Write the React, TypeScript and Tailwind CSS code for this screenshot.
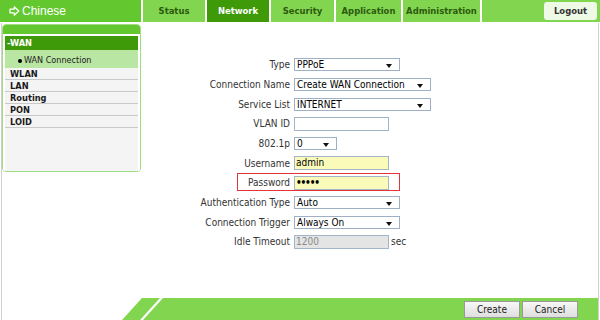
import React from 'react';

const tabs = [
  { name: 'Status', w: 'w-[62px]' },
  { name: 'Network', w: 'w-[62px]', active: true },
  { name: 'Security', w: 'w-[63px]' },
  { name: 'Application', w: 'w-[65px]' },
  { name: 'Administration', w: 'w-[77px]' },
];

const menu = ['WLAN', 'LAN', 'Routing', 'PON', 'LOID'];

function Arrow() {
  return (
    <svg width="11" height="10" viewBox="0 0 11 10" className="mr-[2px]">
      <path d="M1 3.2 H5.2 V0.8 L9.8 5 L5.2 9.2 V6.8 H1 Z" fill="none" stroke="white" strokeWidth="1.2" strokeLinejoin="round" />
    </svg>
  );
}

function Caret() {
  return (
    <svg width="6" height="4" viewBox="0 0 6 4" className="absolute right-[7px] top-[5px]">
      <path d="M0 0 H6 L3 4 Z" fill="#111" />
    </svg>
  );
}

function Select({ value, w }: { value: string; w: string }) {
  return (
    <div className={`relative h-[13px] ${w} border border-[#9db0c6] bg-white pl-[2px] text-black leading-[11px]`}>
      {value}
      <Caret />
    </div>
  );
}

function Input({ value = '', w = 'w-[95px]', tone = 'bg-white', dim = false, dots = false }: { value?: string; w?: string; tone?: string; dim?: boolean; dots?: boolean }) {
  return (
    <div className={`h-[14px] ${w} border border-[#a3b5c9] ${tone} pl-[1px] leading-[12px] ${dim ? 'text-[#8a8a8a]' : 'text-black'} ${dots ? 'tracking-[-1.2px] font-bold' : ''}`}>
      {value}
    </div>
  );
}

function Row({ label, children, boxed = false }: { label: string; children: React.ReactNode; boxed?: boolean }) {
  return (
    <div className="relative flex h-[19.67px] items-center">
      <div className="w-[153px] pr-[4px] text-right text-[#333]">{label}</div>
      {children}
      {boxed && <div className="absolute left-[96px] top-[0px] h-[18px] w-[163px] border-[1.5px] border-[#e3333b]" />}
    </div>
  );
}

export default function App() {
  return (
    <div className="flex h-[320px] w-[600px] flex-col overflow-hidden bg-white font-['DejaVu_Sans_Condensed','DejaVu_Sans',sans-serif] text-[10px]">
      {/* top nav */}
      <div className="flex h-[22px] gap-[2px]">
        <div className="flex w-[141px] items-center bg-[#63c82f] pl-[9px] font-['Liberation_Sans',Arial,sans-serif] text-[12px] text-white">
          <Arrow />
          Chinese
        </div>
        {tabs.map((t) => (
          <div
            key={t.name}
            className={`flex ${t.w} items-center justify-center text-[9.4px] font-bold ${t.active ? 'bg-[#3e9a08] text-white' : 'bg-[#82d54e] text-[#2c5a10]'}`}
          >
            {t.name}
          </div>
        ))}
        <div className="flex flex-1 items-start justify-end bg-[#82d54e] pr-[3px] pt-[2px]">
          <div className="flex h-[18px] w-[53px] items-center justify-center rounded-[3px] bg-[#eef9e6] text-[9.4px] font-bold text-[#333]">
            Logout
          </div>
        </div>
      </div>

      <div className="mx-px mt-[1px] flex flex-1 flex-col border-x border-[#cfcfcf]">
        <div className="flex flex-1">
          {/* sidebar */}
          <div className="mt-[1px] flex h-[148px] w-[139px] flex-col overflow-hidden rounded-[4px] border-[1.5px] border-[#9fdd80] bg-[#f4f4f4]">
            <div className="h-[9px] bg-[#63c82f]" />
            <div className="flex flex-1 flex-col border-[2px] border-white border-b-0 bg-[#f4f4f4]">
              <div className="flex h-[14px] items-center bg-[#3e9a08] pl-[2px] text-[9.2px] font-bold text-white">-WAN</div>
              <div className="flex h-[18px] items-end bg-[#b9e6a2] pb-[1px] pl-[13px] text-[9px] text-[#222]">
                <span className="mb-[4px] mr-[2px] inline-block h-[4px] w-[4px] rounded-full bg-black" />
                WAN Connection
              </div>
              {menu.map((m) => (
                <div key={m} className="flex h-[12px] items-center border-b-[1.5px] border-[#c9c9c9] pl-[5px] text-[9.2px] font-bold text-[#1a1a1a]">
                  {m}
                </div>
              ))}
            </div>
          </div>

          {/* form */}
          <div className="flex flex-1 flex-col pt-[32px]">
            <Row label="Type"><Select value="PPPoE" w="w-[106px]" /></Row>
            <Row label="Connection Name"><Select value="Create WAN Connection" w="w-[137px]" /></Row>
            <Row label="Service List"><Select value="INTERNET" w="w-[137px]" /></Row>
            <Row label="VLAN ID"><Input /></Row>
            <Row label="802.1p"><Select value="0" w="w-[43px]" /></Row>
            <Row label="Username"><Input value="admin" tone="bg-[#fbfbb9]" /></Row>
            <Row label="Password" boxed><Input value="•••••" tone="bg-[#fbfbb9]" dots /></Row>
            <Row label="Authentication Type"><Select value="Auto" w="w-[106px]" /></Row>
            <Row label="Connection Trigger"><Select value="Always On" w="w-[106px]" /></Row>
            <Row label="Idle Timeout">
              <Input value="1200" tone="bg-[#e4e4e4]" dim />
              <span className="ml-[2px] text-[#333]">sec</span>
            </Row>
          </div>
        </div>

        {/* footer */}
        <div className="flex h-[22px]">
          <div className="w-[119px]" />
          <svg width="42" height="22" viewBox="0 0 42 22">
            <polygon points="1,22 19,22 39,0 21,0" fill="#82d54e" />
            <polygon points="22,22 42,22 42,0" fill="#82d54e" />
          </svg>
          <div className="flex flex-1 items-center justify-end gap-[2px] bg-[#82d54e] pr-[20px] pt-[1px]">
            {['Create', 'Cancel'].map((b) => (
              <div key={b} className="flex h-[17px] w-[56px] items-center justify-center border border-[#9a9a9a] bg-gradient-to-b from-[#f7f7f7] to-[#dedede] text-[10px] text-[#222]">
                {b}
              </div>
            ))}
          </div>
        </div>
      </div>
    </div>
  );
}
